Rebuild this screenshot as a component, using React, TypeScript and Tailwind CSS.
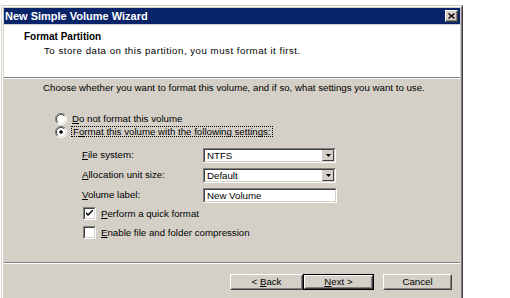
const face = "bg-[#d4d0c8]";

const Radio = ({ checked }: { checked?: boolean }) => (
  <svg width="12" height="12" viewBox="0 0 12 12" className="shrink-0">
    <path d="M10 2 A5.5 5.5 0 0 0 2 10" fill="none" stroke="#808080" strokeWidth="1" />
    <path d="M2 10 A5.5 5.5 0 0 0 10 2" fill="none" stroke="#ffffff" strokeWidth="1" />
    <circle cx="6" cy="6" r="4.5" fill="#ffffff" />
    <path d="M9.2 2.8 A4.5 4.5 0 0 0 2.8 9.2" fill="none" stroke="#404040" strokeWidth="1" />
    {checked && <circle cx="6" cy="6" r="1.8" fill="#000000" />}
  </svg>
);

const Check = ({ checked }: { checked?: boolean }) => (
  <div className="w-[13px] h-[13px] shrink-0 border border-t-[#808080] border-l-[#808080] border-b-white border-r-white">
    <div className="w-full h-full bg-white border border-t-[#404040] border-l-[#404040] border-b-[#d4d0c8] border-r-[#d4d0c8] flex items-center justify-center">
      {checked && (
        <svg width="7" height="7" viewBox="0 0 7 7">
          <path d="M0 2 L0 4 L2 6 L7 1 L7 -1 L2 4 Z" fill="#000" />
        </svg>
      )}
    </div>
  </div>
);

const Sunken = ({ children, className }: { children: React.ReactNode; className?: string }) => (
  <div className={`border border-t-[#808080] border-l-[#808080] border-b-white border-r-white ${className ?? ""}`}>
    <div className="w-full h-full bg-white border border-t-[#404040] border-l-[#404040] border-b-[#d4d0c8] border-r-[#d4d0c8] flex items-center">
      {children}
    </div>
  </div>
);

const Combo = ({ value }: { value: string }) => (
  <Sunken className="w-[133px] h-[15px]">
    <span className="flex-1 pl-[2px] leading-none">{value}</span>
    <div className={`w-[12px] h-full ${face} border border-t-[#d4d0c8] border-l-[#d4d0c8] border-b-[#404040] border-r-[#404040] flex items-center justify-center`}>
      <svg width="5" height="3" viewBox="0 0 5 3">
        <path d="M0 0 H5 L2.5 3 Z" fill="#000" />
      </svg>
    </div>
  </Sunken>
);

const Btn = ({ children, def, className }: { children: React.ReactNode; def?: boolean; className?: string }) => (
  <div className={`h-[16px] ${def ? "border border-black" : ""} ${className ?? ""}`}>
    <div className="w-full h-full border border-t-white border-l-white border-b-[#404040] border-r-[#404040]">
      <div className={`w-full h-full ${face} border border-t-[#d4d0c8] border-l-[#d4d0c8] border-b-[#808080] border-r-[#808080] flex items-center justify-center leading-none`}>
        <span>{children}</span>
      </div>
    </div>
  </div>
);

const U = ({ children }: { children: React.ReactNode }) => <span className="underline underline-offset-1">{children}</span>;

export default function App() {
  return (
    <div className="w-[510px] h-[298px] bg-white overflow-hidden font-['Liberation_Sans',sans-serif] text-[9.7px] text-black">
      <div className="mt-[5px] ml-[1px] w-[462px] h-[300px] border border-t-[#d4d0c8] border-l-[#d4d0c8] border-b-[#404040] border-r-[#404040]">
        <div className={`w-full h-full border border-t-white border-l-white border-b-[#808080] border-r-[#808080] ${face} p-[1px]`}>
          {/* title bar */}
          <div className="h-[16px] bg-[#0a246a] flex items-center justify-between pl-[1px] pr-[2px]">
            <span className="text-white font-bold text-[11px] leading-none">New Simple Volume Wizard</span>
            <div className="w-[13px] h-[12px] border border-t-white border-l-white border-b-[#404040] border-r-[#404040]">
              <div className={`w-full h-full ${face} border-b border-r border-b-[#808080] border-r-[#808080] flex items-center justify-center`}>
                <svg width="7" height="6" viewBox="0 0 7 6">
                  <path d="M0.5 0.5 L6.5 5.5 M6.5 0.5 L0.5 5.5" stroke="#000" strokeWidth="1.4" />
                </svg>
              </div>
            </div>
          </div>

          {/* header */}
          <div className="mt-[1px] h-[52px] bg-white pt-[6px]">
            <div className="pl-[20px] font-bold text-[10px] leading-[12px]">Format Partition</div>
            <div className="pl-[40px] mt-[2px] leading-[12px] tracking-[0.5px]">To store data on this partition, you must format it first.</div>
          </div>
          <div className="h-px bg-[#808080]" />
          <div className="h-px bg-white" />

          {/* body */}
          <div className="pt-[3px]">
            <div className="pl-[39px] leading-[12px]">
              Choose whether you want to format this volume, and if so, what settings you want to use.
            </div>

            <div className="mt-[18px] pl-[51px] h-[13px] flex items-center gap-[5px]">
              <Radio />
              <span className="leading-none"><U>D</U>o not format this volume</span>
            </div>
            <div className="pl-[51px] h-[13px] flex items-center gap-[4px]">
              <Radio checked />
              <span className="leading-none border border-dotted border-black px-[1px]">
                F<U>o</U>rmat this volume with the following settings:
              </span>
            </div>

            <div className="pl-[78px]">
              <div className="mt-[10px] flex items-center">
                <span className="w-[121px]"><U>F</U>ile system:</span>
                <Combo value="NTFS" />
              </div>
              <div className="mt-[5px] flex items-center">
                <span className="w-[121px]"><U>A</U>llocation unit size:</span>
                <Combo value="Default" />
              </div>
              <div className="mt-[5px] flex items-center">
                <span className="w-[121px]"><U>V</U>olume label:</span>
                <Sunken className="w-[134px] h-[15px]">
                  <span className="pl-[2px] leading-none">New Volume</span>
                </Sunken>
              </div>
              <div className="mt-[4px] pl-px h-[13px] flex items-center gap-[5px]">
                <Check checked />
                <span className="leading-none"><U>P</U>erform a quick format</span>
              </div>
              <div className="mt-[6px] pl-px h-[13px] flex items-center gap-[5px]">
                <Check />
                <span className="leading-none"><U>E</U>nable file and folder compression</span>
              </div>
            </div>

            <div className="mt-[23px] h-px bg-[#808080]" />
            <div className="h-px bg-white" />

            <div className="mt-[10px] flex">
              <Btn className="ml-[226px] w-[73px]">&lt; <U>B</U>ack</Btn>
              <Btn def className="w-[71px]"><U>N</U>ext &gt;</Btn>
              <Btn className="ml-[9px] w-[69px]">Cancel</Btn>
            </div>
          </div>
        </div>
      </div>
    </div>
  );
}
